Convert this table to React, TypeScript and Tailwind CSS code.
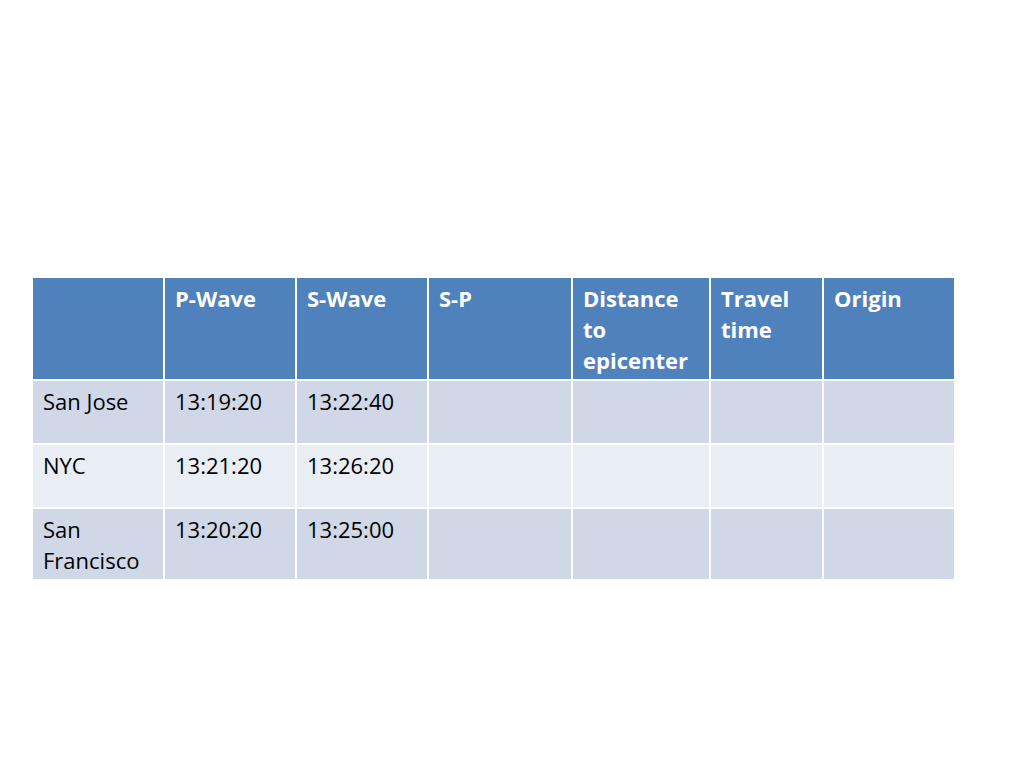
import React from 'react';

const cols = 'grid grid-cols-[130px_130px_130px_142px_136px_111px_130px] gap-x-[2px]';

const headers = ['', 'P-Wave', 'S-Wave', 'S-P', 'Distance to epicenter', 'Travel time', 'Origin'];

const rows = [
  { cells: ['San Jose', '13:19:20', '13:22:40', '', '', '', ''], bg: 'bg-[#d0d8e8]', h: 'h-[62px]' },
  { cells: ['NYC', '13:21:20', '13:26:20', '', '', '', ''], bg: 'bg-[#e9edf4]', h: 'h-[62px]' },
  { cells: ['San Francisco', '13:20:20', '13:25:00', '', '', '', ''], bg: 'bg-[#d0d8e8]', h: 'h-[70px]' },
];

const App: React.FC = () => {
  return (
    <div className="w-[1024px] h-[768px] bg-white pt-[278px] pl-[33px] font-['Open_Sans',sans-serif]">
      <div className="flex flex-col w-[921px]">
        {/* header */}
        <div className={`${cols} h-[101px]`}>
          {headers.map((h, i) => (
            <div key={i} className="bg-[#4f81bd] text-white font-bold text-[22px] leading-[31px] pl-[10px] pr-2 pt-[5px]">
              {h}
            </div>
          ))}
        </div>
        <div className="h-[2px]" />
        {rows.map((r, ri) => (
          <div key={ri} className={`${cols} ${r.h} ${ri > 0 ? 'mt-[2px]' : ''}`}>
            {r.cells.map((c, ci) => (
              <div key={ci} className={`${r.bg} text-black text-[22px] leading-[31px] pl-[10px] pr-2 pt-[5px]`}>
                {c}
              </div>
            ))}
          </div>
        ))}
      </div>
    </div>
  );
};

export default App;
